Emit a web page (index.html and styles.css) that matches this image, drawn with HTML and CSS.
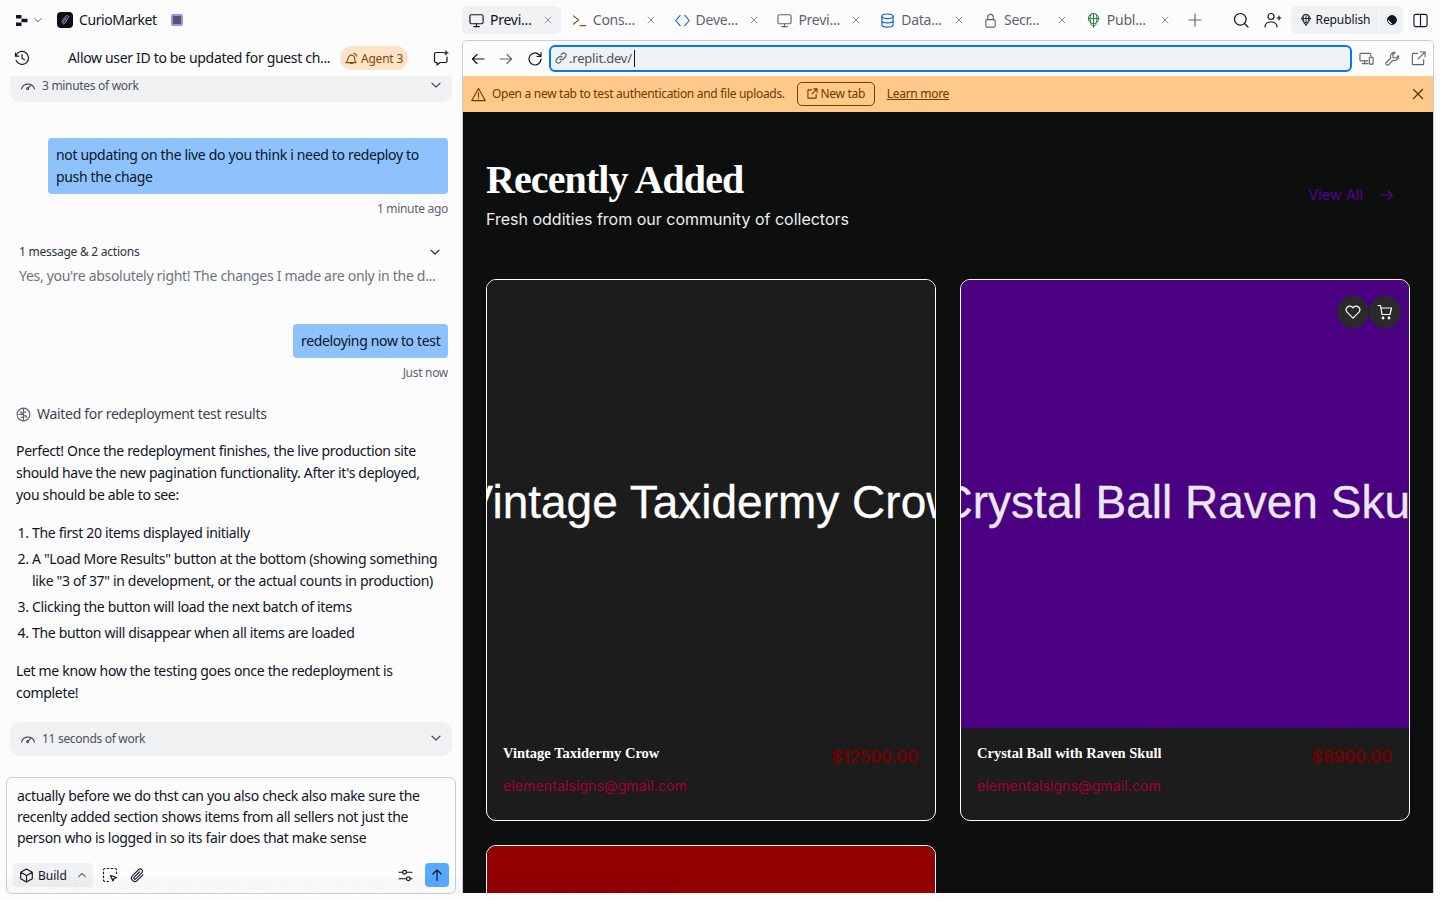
FILE: index.html
```html
<!DOCTYPE html>
<html lang="en">
<head>
    <meta charset="UTF-8">
    <title>CurioMarket - Replit</title>
    <link rel="stylesheet" href="styles.css">
</head>
<body>
    <svg class="sprites" width="0" height="0">
        <symbol id="i-close" viewBox="0 0 12 12"><path d="M2.500 2.500l7 7M9.500 2.500l-7 7"/></symbol>
        <symbol id="i-chevron" viewBox="0 0 12 12"><path d="M2 4.200l4 3.800 4-3.800"/></symbol>
        <symbol id="i-monitor" viewBox="0 0 16 16"><rect x="1" y="1.800" width="14" height="9.700" rx="1.600"/><path d="M8 11.500v3M5 14.500h6"/></symbol>
        <symbol id="i-gauge" viewBox="0 0 16 16"><path d="M1.500 12a6.800 6.800 0 0 1 13 0"/><path d="M8.200 11l2.600-2.600"/><circle cx="7.600" cy="11.600" r="1"/></symbol>
        <symbol id="i-publish" viewBox="0 0 16 16"><circle cx="8" cy="6" r="5.500"/><path d="M2.500 6h11M8 .5v15M5.400 1.200c-1.500 2.900-1.500 6.700 0 9.600M10.600 1.200c1.500 2.900 1.500 6.700 0 9.600M5 12l3 2.500 3-2.500"/></symbol>
    </svg>

    <div class="app">
        <aside class="agent">
            <div class="project-bar">
                <svg class="replit-logo" width="12" height="11" viewBox="0 0 12 11"><path d="M0 0h5.500v3.500H0zM5.500 3.700H11.500v3.500H5.500zM0 7.400h5.500V11H0z"/></svg>
                <svg class="icon icon-grey" width="10" height="10"><use href="#i-chevron"/></svg>
                <span class="project-icon">
                    <svg width="10" height="12" viewBox="0 0 10 12"><path d="M1.500 8L6 2.200c1-1.200 3-.2 2.400 1.200L4.500 9.500c-.7 1-2.200.3-1.700-.9L6.500 3.500"/></svg>
                </span>
                <span class="project-name">CurioMarket</span>
                <span class="stop-icon"></span>
            </div>

            <div class="chat-head">
                <svg class="icon" width="16" height="16" viewBox="0 0 16 16"><path d="M1.500 3v3.200h3.200"/><path d="M1.800 6a6.500 6.500 0 1 1 .3 4.600"/><path d="M8 4.500v3.800l2.500 1.400"/></svg>
                <span class="chat-title">Allow user ID to be updated for guest ch...</span>
                <span class="agent-pill">
                    <svg class="icon" width="13" height="13" viewBox="0 0 14 14"><path d="M1 11.500c1.500-1 2-2.500 2.300-4.500C3.600 4.500 5.500 3 7.500 3.500s3.300 2.400 3 4.500c-.2 1.500.3 2.600 1.500 3.500z"/><path d="M5.500 11.500c.3 1.200 2.500 1.200 3 0M9.500 1.500c1.500.3 2.500 1.300 3 2.800"/></svg>
                    Agent 3
                </span>
                <svg class="icon new-chat" width="16" height="16" viewBox="0 0 16 16"><path d="M10 2.500H3a1.500 1.500 0 0 0-1.500 1.500v7A1.500 1.500 0 0 0 3 12.500h1V15l3-2.500h5.500A1.500 1.500 0 0 0 14 11V7"/><path d="M13 .8v4M11 2.800h4"/></svg>
            </div>

            <div class="chat-log">
                <div class="work-row work-row-cut">
                    <svg class="icon" width="16" height="16"><use href="#i-gauge"/></svg>
                    <span>3 minutes of work</span>
                    <svg class="icon row-chevron" width="12" height="12"><use href="#i-chevron"/></svg>
                </div>

                <div class="bubble bubble-first">not updating on the live do you think i need to redeploy to push the chage</div>
                <div class="msg-time">1 minute ago</div>

                <div class="group-head">
                    <span>1 message &amp; 2 actions</span>
                    <svg class="icon" width="12" height="12"><use href="#i-chevron"/></svg>
                </div>
                <div class="group-text">Yes, you're absolutely right! The changes I made are only in the d...</div>

                <div class="bubble bubble-second">redeloying now to test</div>
                <div class="msg-time">Just now</div>

                <div class="waited">
                    <svg class="icon icon-grey" width="15" height="15" viewBox="0 0 16 16"><circle cx="8" cy="8" r="6.800"/><path d="M8 1.500v13M8 6.500H5.200V4.500M8 9.500h2.800v2M8 8H3M8 5.500h2.500M8 11H5.500"/></svg>
                    <span>Waited for redeployment test results</span>
                </div>

                <p class="reply reply-first">Perfect! Once the redeployment finishes, the live production site should have the new pagination functionality. After it's deployed, you should be able to see:</p>
                <ol class="reply-list">
                    <li>The first 20 items displayed initially</li>
                    <li>A "Load More Results" button at the bottom (showing something like "3 of 37" in development, or the actual counts in production)</li>
                    <li>Clicking the button will load the next batch of items</li>
                    <li>The button will disappear when all items are loaded</li>
                </ol>
                <p class="reply reply-last">Let me know how the testing goes once the redeployment is complete!</p>

                <div class="work-row work-row-full">
                    <svg class="icon" width="16" height="16"><use href="#i-gauge"/></svg>
                    <span>11 seconds of work</span>
                    <svg class="icon row-chevron" width="12" height="12"><use href="#i-chevron"/></svg>
                </div>
            </div>

            <div class="composer">
                <div class="composer-text">actually before we do thst can you also check also make sure the recenlty added section shows items from all sellers not just the person who is logged in so its fair does that make sense</div>
                <div class="composer-tools">
                    <div class="build-btn">
                        <svg class="icon" width="15" height="15" viewBox="0 0 16 16"><path d="M8 1l6.200 3.500v7L8 15l-6.200-3.500v-7zM1.800 4.500L8 8l6.200-3.500M8 8v7"/></svg>
                        <span>Build</span>
                        <svg class="icon caret" width="10" height="10" viewBox="0 0 12 12"><path d="M2 8l4-3.800L10 8"/></svg>
                    </div>
                    <svg class="icon tool-select" width="16" height="16" viewBox="0 0 16 16"><path stroke-dasharray="1.500 2.500" d="M6.500 14.500H3A1.500 1.500 0 0 1 1.500 13V3A1.500 1.500 0 0 1 3 1.500h10A1.500 1.500 0 0 1 14.500 3v3.500"/><path d="M8.500 8.500l6 2-2.500 1-1 2.500z"/></svg>
                    <svg class="icon tool-clip" width="15" height="15" viewBox="0 0 16 16"><path d="M13.800 7.300l-6 6a3.600 3.600 0 0 1-5.100-5.100l6.500-6.500a2.400 2.400 0 0 1 3.400 3.400L6.200 11.500a1.200 1.200 0 0 1-1.700-1.700l5.800-5.800"/></svg>
                    <svg class="icon tool-sliders" width="15" height="15" viewBox="0 0 16 16"><path d="M1 4.500h4M9 4.500h6M1 11.500h8M13 11.500h2"/><circle cx="7" cy="4.500" r="2"/><circle cx="11" cy="11.500" r="2"/></svg>
                    <button class="send-btn">
                        <svg class="icon" width="14" height="14" viewBox="0 0 14 14"><path d="M7 12.500V1.800M2.800 6L7 1.800 11.200 6"/></svg>
                    </button>
                </div>
            </div>
        </aside>

        <section class="workspace">
            <div class="tab-bar">
                <div class="tab tab-active">
                    <svg class="icon" width="15" height="15"><use href="#i-monitor"/></svg>
                    <span class="tab-name">Previ...</span>
                    <svg class="icon tab-close" width="10" height="10"><use href="#i-close"/></svg>
                </div>
                <div class="tab">
                    <svg class="icon icon-console" width="15" height="15" viewBox="0 0 16 16"><path d="M1.500 3l5.500 4.500-5.500 4.500M8.500 13.500h6"/></svg>
                    <span class="tab-name">Cons...</span>
                    <svg class="icon tab-close" width="10" height="10"><use href="#i-close"/></svg>
                </div>
                <div class="tab">
                    <svg class="icon icon-code" width="15" height="15" viewBox="0 0 16 16"><path d="M5.500 2.500L.8 8l4.700 5.500M10.500 2.500L15.200 8l-4.700 5.500"/></svg>
                    <span class="tab-name">Deve...</span>
                    <svg class="icon tab-close" width="10" height="10"><use href="#i-close"/></svg>
                </div>
                <div class="tab">
                    <svg class="icon icon-grey" width="15" height="15"><use href="#i-monitor"/></svg>
                    <span class="tab-name">Previ...</span>
                    <svg class="icon tab-close" width="10" height="10"><use href="#i-close"/></svg>
                </div>
                <div class="tab">
                    <svg class="icon icon-code" width="15" height="15" viewBox="0 0 16 16"><ellipse cx="8" cy="3.500" rx="6" ry="2.500"/><path d="M2 3.500v9c0 1.400 2.700 2.500 6 2.500s6-1.100 6-2.500v-9M2 8c0 1.400 2.700 2.500 6 2.500s6-1.100 6-2.500"/></svg>
                    <span class="tab-name">Data...</span>
                    <svg class="icon tab-close" width="10" height="10"><use href="#i-close"/></svg>
                </div>
                <div class="tab">
                    <svg class="icon icon-grey" width="15" height="15" viewBox="0 0 16 16"><rect x="3" y="7" width="10" height="8" rx="1.500"/><path d="M5 7V4.500a3 3 0 0 1 6 0V7"/></svg>
                    <span class="tab-name">Secr...</span>
                    <svg class="icon tab-close" width="10" height="10"><use href="#i-close"/></svg>
                </div>
                <div class="tab">
                    <svg class="icon icon-green" width="15" height="15"><use href="#i-publish"/></svg>
                    <span class="tab-name">Publ...</span>
                    <svg class="icon tab-close" width="10" height="10"><use href="#i-close"/></svg>
                </div>
                <svg class="icon icon-grey tab-plus" width="14" height="14" viewBox="0 0 14 14"><path d="M7 1v12M1 7h12"/></svg>

                <div class="bar-actions">
                    <svg class="icon" width="16" height="16" viewBox="0 0 16 16"><circle cx="7.300" cy="7.300" r="5.800"/><path d="M11.500 11.500L15 15"/></svg>
                    <svg class="icon" width="18" height="16" viewBox="0 0 18 16"><circle cx="7" cy="4.500" r="3"/><path d="M1 15c0-3.500 2.500-5 6-5s6 1.500 6 5M15 4v4M13 6h4"/></svg>
                    <div class="republish">
                        <button class="republish-main">
                            <svg class="icon" width="12" height="12"><use href="#i-publish"/></svg>
                            Republish
                        </button>
                        <button class="republish-side"><span class="side-dot"></span></button>
                    </div>
                    <svg class="icon" width="15" height="15" viewBox="0 0 16 16"><rect x="1" y="1.500" width="14" height="13" rx="2"/><path d="M8 1.500v13"/></svg>
                </div>
            </div>

            <div class="pane">
                <div class="address-bar">
                    <svg class="icon nav-back" width="14" height="14" viewBox="0 0 14 14"><path d="M13 7H1.500M6 2.500L1.500 7 6 11.500"/></svg>
                    <svg class="icon icon-grey nav-forward" width="14" height="14" viewBox="0 0 14 14"><path d="M1 7h11.500M8 2.500L12.500 7 8 11.500"/></svg>
                    <svg class="icon nav-reload" width="16" height="16" viewBox="0 0 16 16"><path d="M14 8a6 6 0 1 1-1.800-4.300L14 5.500M14 1.500v4h-4"/></svg>
                    <div class="url-field">
                        <svg class="icon icon-grey" width="12" height="12" viewBox="0 0 12 12"><path d="M5 7a2.300 2.300 0 0 0 3.300 0l2-2A2.300 2.300 0 0 0 7 1.700l-.8.800M7 5a2.300 2.300 0 0 0-3.300 0l-2 2A2.300 2.300 0 0 0 5 10.300l.8-.8"/></svg>
                        <span class="url-text">.replit.dev/</span>
                        <span class="url-caret"></span>
                    </div>
                    <div class="address-tools">
                        <svg class="icon icon-grey" width="15" height="15" viewBox="0 0 16 16"><path d="M9.500 10.500H2A1 1 0 0 1 1 9.500v-6a1 1 0 0 1 1-1h9.500a1 1 0 0 1 1 1V5M6 10.500v3M3.500 13.500h6"/><rect x="11" y="6.500" width="4" height="7.500" rx="1"/></svg>
                        <svg class="icon icon-grey" width="15" height="15" viewBox="0 0 16 16"><path d="M10 1.500a4.200 4.200 0 0 0-3.800 5.800L1.500 12a1.700 1.700 0 0 0 2.500 2.500l4.700-4.700A4.200 4.200 0 0 0 14.300 5l-2.600 2.500-3-.5-.5-3 2.500-2.500z"/></svg>
                        <svg class="icon icon-grey" width="15" height="15" viewBox="0 0 16 16"><path d="M7 2.500H2.500a1 1 0 0 0-1 1v10a1 1 0 0 0 1 1h10a1 1 0 0 0 1-1V9M10 1h5v5M15 1L7.500 8.500"/></svg>
                    </div>
                </div>

                <div class="notice">
                    <svg class="icon" width="15" height="15" viewBox="0 0 16 16"><path d="M8 1.500L15.200 14.500H.8zM8 6v4.200M8 11.800v.7"/></svg>
                    <span class="notice-text">Open a new tab to test authentication and file uploads.</span>
                    <button class="notice-btn">
                        <svg class="icon" width="11" height="11" viewBox="0 0 12 12"><path d="M5 2H1.500a.5.500 0 0 0-.5.500v8a.5.500 0 0 0 .5.500h8a.5.500 0 0 0 .5-.5V7M7.500 1H11v3.500M11 1L5.500 6.500"/></svg>
                        New tab
                    </button>
                    <a class="notice-link" href="#">Learn more</a>
                    <svg class="icon notice-close" width="12" height="12" viewBox="0 0 12 12"><path d="M1.500 1.500l9 9M10.500 1.500l-9 9"/></svg>
                </div>

                <main class="site">
                    <div class="site-head">
                        <div>
                            <h1>Recently Added</h1>
                            <p class="site-sub">Fresh oddities from our community of collectors</p>
                        </div>
                        <a class="view-all" href="#">
                            View All
                            <svg class="icon" width="14" height="14" viewBox="0 0 14 14"><path d="M1 7h11.500M8 2.500L12.500 7 8 11.500"/></svg>
                        </a>
                    </div>

                    <div class="card-grid">
                        <article class="card">
                            <div class="card-image image-crow">Vintage Taxidermy Crow</div>
                            <div class="card-body">
                                <div class="card-row">
                                    <h3>Vintage Taxidermy Crow</h3>
                                    <span class="price">$12500.00</span>
                                </div>
                                <div class="seller">elementalsigns@gmail.com</div>
                            </div>
                        </article>
                        <article class="card">
                            <div class="card-image image-ball">Crystal Ball Raven Skull</div>
                            <div class="card-actions">
                                <span class="round-btn">
                                    <svg class="icon" width="16" height="16" viewBox="0 0 16 16"><path d="M8 14.200L2 8.200a3.700 3.700 0 0 1 5.200-5.200l.8.800.8-.8A3.700 3.700 0 0 1 14 8.200z"/></svg>
                                </span>
                                <span class="round-btn">
                                    <svg class="icon" width="16" height="16" viewBox="0 0 16 16"><path d="M1 1.500h2.500l1.500 9h8l1.500-6.500H4"/><circle cx="6" cy="14" r=".8"/><circle cx="12" cy="14" r=".8"/></svg>
                                </span>
                            </div>
                            <div class="card-body">
                                <div class="card-row">
                                    <h3>Crystal Ball with Raven Skull</h3>
                                    <span class="price">$8900.00</span>
                                </div>
                                <div class="seller">elementalsigns@gmail.com</div>
                            </div>
                        </article>
                        <article class="card">
                            <div class="card-image image-red"></div>
                        </article>
                    </div>
                </main>
            </div>
        </section>
    </div>

    <div class="status-link">https://c8165041-a6c3-4cdd-9db6-dd72480c3981-00-15ym6l13xlbes.kirk.replit.dev/products/crystal-ball-raven-skull</div>
</body>
</html>
```

FILE: styles.css
```css
* {
    margin: 0;
    padding: 0;
    box-sizing: border-box;
}
html, body {
    height: 100%;
    overflow: hidden;
}
body {
    font-family: "Noto Sans", "Liberation Sans", sans-serif;
    font-size: 14px;
    color: #0e1525;
    background-color: #fcfcfd;
}
button {
    font: inherit;
    color: inherit;
    border: 0;
    background: none;
}
.sprites {
    position: absolute;
}
.icon {
    flex: none;
    fill: none;
    stroke: currentColor;
    stroke-width: 1.2;
    stroke-linecap: round;
    stroke-linejoin: round;
}
.icon-grey {
    color: #5c6470;
}
.app {
    display: flex;
    height: 900px;
}

/* left side: agent chat */
.agent {
    width: 462px;
    flex: none;
    display: flex;
    flex-direction: column;
}
.project-bar {
    height: 40px;
    flex: none;
    display: flex;
    align-items: center;
    padding-left: 16px;
}
.replit-logo {
    fill: #0e1525;
    margin-right: 5px;
}
.project-icon {
    width: 16px;
    height: 16px;
    margin-left: 14px;
    border-radius: 4px;
    background-color: #0e0e12;
    display: flex;
    align-items: center;
    justify-content: center;
}
.project-icon svg {
    fill: none;
    stroke: #a98fd8;
    stroke-width: 1;
}
.project-name {
    margin-left: 6px;
    margin-bottom: 2px;
    letter-spacing: -0.4px;
}
.stop-icon {
    width: 12px;
    height: 12px;
    margin-left: 14px;
    border: 2px solid #a58cf0;
    border-radius: 2px;
    background-color: #55586a;
}
.chat-head {
    height: 36px;
    flex: none;
    display: flex;
    align-items: center;
    padding-left: 14px;
}
.chat-title {
    margin-left: 38px;
    margin-bottom: 2px;
    width: 272px;
    white-space: nowrap;
    letter-spacing: -0.33px;
}
.agent-pill {
    width: 68px;
    height: 24px;
    border-radius: 12px;
    background-color: #fde3c8;
    color: #8a4500;
    font-size: 12px;
    display: flex;
    align-items: center;
    justify-content: center;
    gap: 3px;
    letter-spacing: -0.2px;
}
.new-chat {
    margin-left: 25px;
}
.chat-log {
    flex: 1;
    overflow: hidden;
    padding: 0 14px 0 16px;
}
.work-row {
    height: 34px;
    margin: 0 -4px 0 -6px;
    padding: 0 10px 2px;
    display: flex;
    align-items: center;
    gap: 6px;
    background-color: #f0f1f2;
    border-radius: 10px;
    font-size: 12px;
    color: #4a515d;
    letter-spacing: -0.3px;
}
.work-row .row-chevron {
    margin-left: auto;
}
.work-row-cut {
    height: 26px;
    border-radius: 0 0 10px 10px;
    padding-bottom: 8px;
}
.work-row-full {
    margin-top: 18px;
}
.bubble {
    border-radius: 4px;
    background-color: #8dc2fc;
    padding: 6px 8px;
    line-height: 22px;
    letter-spacing: -0.33px;
}
.bubble-first {
    margin: 36px 0 0 32px;
}
.bubble-second {
    margin: 37px 0 0 auto;
    width: 155px;
    white-space: nowrap;
}
.msg-time {
    margin-top: 6px;
    font-size: 12px;
    line-height: 18px;
    text-align: right;
    color: #5c6470;
    letter-spacing: -0.3px;
}
.group-head {
    margin-top: 25px;
    padding: 0 7px 0 3px;
    display: flex;
    justify-content: space-between;
    align-items: center;
    font-size: 12px;
    line-height: 18px;
    letter-spacing: -0.25px;
    color: #2d3440;
}
.group-text {
    margin-top: 4px;
    padding-left: 3px;
    line-height: 22px;
    white-space: nowrap;
    color: #6d7480;
    letter-spacing: -0.3px;
}
.waited {
    margin-top: 21px;
    display: flex;
    align-items: center;
    gap: 6px;
    line-height: 22px;
    color: #3d4450;
    letter-spacing: -0.3px;
}
.reply {
    line-height: 22px;
    letter-spacing: -0.33px;
}
.reply-first {
    margin-top: 15px;
    padding-right: 14px;
}
.reply-last {
    margin-top: 16px;
    padding-right: 30px;
}
.reply-list {
    margin-top: 16px;
    padding-left: 16px;
    line-height: 22px;
    letter-spacing: -0.33px;
}
.reply-list li + li {
    margin-top: 4px;
}
.composer {
    flex: none;
    width: 450px;
    height: 117px;
    margin: 0 0 6px 6px;
    padding: 7px 10px 6px;
    border: 1px solid #c9ccd2;
    border-radius: 6px;
    background-color: #fcfcfd;
    display: flex;
    flex-direction: column;
    justify-content: space-between;
}
.composer-text {
    line-height: 21px;
    letter-spacing: -0.33px;
}
.composer-tools {
    margin-left: -4px;
    margin-right: -4px;
    display: flex;
    align-items: center;
}
.build-btn {
    width: 80px;
    height: 24px;
    padding-left: 6px;
    border-radius: 4px;
    background-color: #f0f1f2;
    display: flex;
    align-items: center;
    gap: 4px;
    font-size: 12px;
}
.caret {
    margin-left: auto;
    margin-right: 6px;
}
.tool-select {
    margin-left: 9px;
}
.tool-clip {
    margin-left: 12px;
}
.tool-sliders {
    margin-left: auto;
    margin-right: 12px;
}
.send-btn {
    width: 24px;
    height: 24px;
    border-radius: 4px;
    background-color: #57abff;
    display: flex;
    align-items: center;
    justify-content: center;
}

/* right side: tabs and preview */
.workspace {
    width: 972px;
    flex: none;
    display: flex;
    flex-direction: column;
    height: 893px;
}
.tab-bar {
    height: 40px;
    flex: none;
    display: flex;
    align-items: center;
    gap: 3.8px;
}
.tab {
    width: 99px;
    height: 28px;
    padding: 0 8px 0 7px;
    border-radius: 6px;
    display: flex;
    align-items: center;
    gap: 6px;
    color: #5c6470;
}
.tab-active {
    background-color: #f0f1f2;
    color: #0e1525;
}
.tab-name {
    flex: 1;
    margin-bottom: 2px;
    letter-spacing: -0.25px;
    white-space: nowrap;
}
.tab-close {
    color: #8a919c;
}
.icon-console {
    color: #7a5b00;
}
.icon-code {
    color: #0f62c9;
}
.icon-green {
    color: #1e7a32;
    stroke-width: 1;
}
.tab-plus {
    margin-left: 6px;
}
.bar-actions {
    margin-left: auto;
    margin-right: 6px;
    display: flex;
    align-items: center;
}
.bar-actions > svg:first-child {
    margin-right: 15px;
}
.republish {
    margin-left: 9px;
    display: flex;
    gap: 1px;
    margin-right: 10px;
}
.republish-main {
    width: 88px;
    height: 28px;
    padding-bottom: 1px;
    border-radius: 6px 0 0 6px;
    background-color: #f0f1f2;
    font-size: 12px;
    letter-spacing: -0.1px;
    display: flex;
    align-items: center;
    justify-content: center;
    gap: 4px;
}
.republish-side {
    width: 23px;
    height: 28px;
    border-radius: 0 6px 6px 0;
    background-color: #f0f1f2;
    display: flex;
    align-items: center;
    justify-content: center;
}
.side-dot {
    width: 10px;
    height: 10px;
    border-radius: 50%;
    border: 1px solid #0e1525;
    background: linear-gradient(45deg, #f0f1f2 30%, #0e1525 30%);
}
.pane {
    flex: 1;
    min-height: 0;
    display: flex;
    flex-direction: column;
    border: 1px solid #c9ccd2;
    border-bottom: 0;
    border-radius: 5px 5px 0 0;
    overflow: hidden;
}
.address-bar {
    height: 35px;
    flex: none;
    display: flex;
    align-items: center;
    padding-left: 8px;
    background-color: #fcfcfd;
}
.nav-forward {
    margin-left: 14px;
}
.nav-reload {
    margin-left: 14px;
}
.url-field {
    width: 803px;
    height: 27px;
    margin-left: 6px;
    padding: 0 0 1px 4px;
    border: 2px solid #0079f2;
    border-radius: 6px;
    background-color: #f0f1f2;
    display: flex;
    align-items: center;
    gap: 2px;
    font-size: 13px;
    letter-spacing: -0.2px;
    color: #4a515d;
}
.url-caret {
    width: 1px;
    height: 17px;
    background-color: #0e1525;
}
.address-tools {
    margin-left: 7px;
    display: flex;
    gap: 11px;
}
.notice {
    height: 36px;
    flex: none;
    padding: 0 9px 0 8px;
    display: flex;
    align-items: center;
    background-color: #fec98a;
    color: #6e3800;
    font-size: 12px;
    letter-spacing: -0.3px;
}
.notice-text {
    margin-left: 6px;
    margin-bottom: 2px;
}
.notice-btn {
    width: 78px;
    height: 24px;
    margin-left: 12px;
    padding-bottom: 1px;
    border: 1px solid #7a4000;
    border-radius: 5px;
    display: flex;
    align-items: center;
    justify-content: center;
    gap: 3px;
    letter-spacing: -0.3px;
}
.notice-link {
    margin-left: 12px;
    margin-bottom: 2px;
    color: #6e3800;
}
.notice-close {
    margin-left: auto;
    color: #5a2e00;
}

/* the site inside the preview */
.site {
    flex: 1;
    min-height: 0;
    overflow: hidden;
    padding: 0 23px;
    background-color: #0d0f0f;
    font-family: Inter, "Liberation Sans", sans-serif;
}
.site-head {
    height: 167px;
    padding-top: 43px;
    display: flex;
    justify-content: space-between;
    align-items: flex-start;
}
.site-head h1 {
    font-family: "Liberation Serif", serif;
    font-size: 40px;
    letter-spacing: -0.9px;
    line-height: 50px;
    color: #ffffff;
}
.site-sub {
    margin-top: 1px;
    font-size: 16px;
    line-height: 26px;
    color: #eeeeee;
}
.view-all {
    margin-top: 31px;
    padding-right: 16px;
    display: flex;
    align-items: center;
    gap: 17px;
    font-size: 14.5px;
    color: #560096;
    text-decoration: none;
}
.card-grid {
    display: grid;
    grid-template-columns: 450px 450px;
    gap: 24px;
}
.card {
    position: relative;
    border: 1px solid #ffffff;
    border-radius: 10px;
    background-color: #1c1c1c;
    overflow: hidden;
}
.card-image {
    height: 448px;
    padding-bottom: 5px;
    display: flex;
    align-items: center;
    justify-content: center;
    overflow: hidden;
    white-space: nowrap;
    font-family: "Liberation Sans", Arial, sans-serif;
    font-size: 46px;
    -webkit-text-stroke: 0.3px currentColor;
}
.image-crow {
    background-color: #1c1c1c;
    color: #ffffff;
}
.image-ball {
    background-color: #4b0082;
    color: #e8e8ee;
}
.image-red {
    background-color: #930000;
}
.card-actions {
    position: absolute;
    top: 16px;
    right: 8px;
    display: flex;
}
.round-btn {
    width: 32px;
    height: 32px;
    border-radius: 50%;
    background-color: #2a2a2a;
    color: #ffffff;
    display: flex;
    align-items: center;
    justify-content: center;
}
.card-body {
    height: 92px;
    padding: 15px 17px 0 16px;
}
.card-row {
    display: flex;
    justify-content: space-between;
    align-items: flex-start;
}
.card-row h3 {
    font-family: "Liberation Serif", serif;
    font-size: 14.5px;
    line-height: 20px;
    color: #ffffff;
}
.price {
    margin-top: 3px;
    font-size: 17px;
    font-weight: 600;
    letter-spacing: -0.25px;
    line-height: 22px;
    color: #760000;
}
.seller {
    margin-top: 8px;
    font-size: 14px;
    line-height: 20px;
    letter-spacing: 0.12px;
    color: #a50034;
}

/* faint hover status along the bottom edge */
.status-link {
    position: absolute;
    left: 5px;
    top: 877px;
    width: 672px;
    height: 16px;
    overflow: hidden;
    white-space: nowrap;
    font-size: 12px;
    line-height: 16px;
    color: rgba(0, 0, 0, 0.03);
    background-color: rgba(0, 0, 0, 0.015);
    pointer-events: none;
}
```
